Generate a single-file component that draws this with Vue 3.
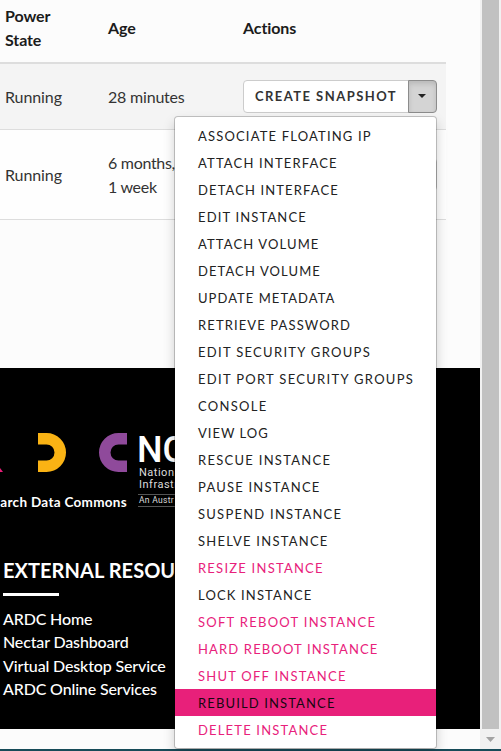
<script setup>
// label, kind, letter-spacing in px
const items = [
  ['Associate Floating IP', 0, 1.17], ['Attach Interface', 0, 1.17], ['Detach Interface', 0, 1.12],
  ['Edit Instance', 0, 1.15], ['Attach Volume', 0, 1.13], ['Detach Volume', 0, 1.1],
  ['Update Metadata', 0, 1.05], ['Retrieve Password', 0, 1.12], ['Edit Security Groups', 0, 1.3],
  ['Edit Port Security Groups', 0, 1.3], ['Console', 0, 1.3], ['View Log', 0, 1.0],
  ['Rescue Instance', 0, 1.28], ['Pause Instance', 0, 1.22], ['Suspend Instance', 0, 1.24],
  ['Shelve Instance', 0, 1.24], ['Resize Instance', 1, 1.23], ['Lock Instance', 0, 1.15],
  ['Soft Reboot Instance', 1, 1.27], ['Hard Reboot Instance', 1, 1.15], ['Shut Off Instance', 1, 1.24],
  ['Rebuild Instance', 2, 1.13], ['Delete Instance', 1, 1.18],
]
const kinds = ['', 'danger', 'active']
const links = ['ARDC Home', 'Nectar Dashboard', 'Virtual Desktop Service', 'ARDC Online Services']
</script>

<template>
  <div class="window">
    <div class="viewport">
      <div class="page">
        <section class="table">
          <div class="row head"><span>Power<br>State</span><span>Age</span><span>Actions</span></div>
          <div class="row first">
            <span>Running</span><span class="age">28 minutes</span>
            <div class="group">
              <button class="snapshot">Create Snapshot</button>
              <button class="toggle"><i class="caret"></i></button>
              <ul class="menu">
                <li v-for="[label, kind, gap] in items" :key="label" :class="kinds[kind]" :style="{ letterSpacing: gap + 'px' }">{{ label }}</li>
              </ul>
            </div>
          </div>
          <div class="row second">
            <span>Running</span><span class="age">6 months,<br>1 week</span>
            <div class="group"><button class="snapshot"></button><button class="toggle closed"></button></div>
          </div>
        </section>
        <footer>
          <div class="logos">
            <div class="ardc">
              <svg width="128" height="40" viewBox="0 0 128 40">
                <path d="M0 35L3 39H0Z" fill="#e91e79" />
                <path d="M38 0H46.5A19.5 19.5 0 0 1 46.5 39H38V27.5H46.5A8 8 0 0 0 46.5 11.5H38Z" fill="#fab314" />
                <path d="M127 0H118.5A19.5 19.5 0 0 0 118.5 39H127V27.5H118.5A8 8 0 0 1 118.5 11.5H127Z" fill="#8f4a9b" />
              </svg>
              <div class="commons">arch Data Commons</div>
            </div>
            <div class="ncris">
              <div class="big">NC</div>
              <div class="small">Nation<br>Infrastr</div>
              <div class="tiny">An Austr</div>
            </div>
          </div>
          <h3>EXTERNAL RESOU</h3>
          <div class="rule"></div>
          <nav><a v-for="l in links" :key="l">{{ l }}</a></nav>
        </footer>
      </div>
      <div class="scrollbar"><div class="thumb"></div><div class="end"><svg width="9" height="5" viewBox="0 0 9 5"><path d="M0 0H9L4.5 5Z" fill="#a3a3a3" /></svg></div></div>
    </div>
    <div class="taskbar"></div>
  </div>
</template>

<style>
body { overflow: hidden; }
</style>
<style scoped>
* { box-sizing: border-box; }
.window { width: 501px; height: 751px; overflow: hidden; font: 16px/24px Lato, "Liberation Sans", sans-serif; color: #333; background: #fcfcfc; }
.viewport { display: flex; height: 749px; }
.page { width: 480px; flex: none; }
.table { height: 368px; }
.row { display: grid; grid-template-columns: 103px 135px 203px; padding-left: 5px; width: 446px; align-items: center; }
.head { height: 64px; padding-bottom: 6px; border-bottom: 2px solid #ddd; font-weight: 700; color: #1b1b1b; }
.first { height: 66px; border-bottom: 1px solid #ddd; background: #f4f4f4; }
.second { height: 90px; border-bottom: 1px solid #ddd; background: #fefefe; }
.row > span { letter-spacing: -.1px; }
.row > .age { letter-spacing: -.2px; }
.second > .age { letter-spacing: -.3px; }
.group { position: relative; display: flex; width: 194px; height: 33px; }
button { height: 33px; margin: 0; padding: 0; background: #fff; border: 1px solid #ccc; font: 700 13px/31px Lato, sans-serif; color: #333; }
.snapshot { width: 166px; flex: none; border-radius: 4px 0 0 4px; letter-spacing: 1.46px; text-transform: uppercase; white-space: nowrap; }
.toggle { display: flex; align-items: center; justify-content: center; width: 29px; flex: none; margin-left: -1px; border-color: #8c8c8c; border-radius: 0 4px 4px 0; background: #d4d4d4; box-shadow: inset 0 3px 5px rgba(0,0,0,.125); }
.closed { background: #fff; border-color: #ccc; box-shadow: none; }
.caret { margin-top: -1px; margin-right: 1px; border: 4px solid transparent; border-top-color: #222; border-bottom: 0; }
.menu { position: absolute; z-index: 2; top: 36px; right: 0; width: 263px; height: 633px; margin: 0; padding: 5px 0; list-style: none; background: #fff; background-clip: padding-box; border: 1px solid rgba(0,0,0,.2); border-radius: 4px; box-shadow: 0 6px 12px rgba(0,0,0,.175); }
li { height: 27px; padding-left: 23px; font-size: 13px; line-height: 28px; text-transform: uppercase; color: #222; white-space: nowrap; }
.danger { color: #e8217b; }
.active { background: #e8207a; color: #160710; }
footer { height: 361px; overflow: hidden; background: #000; color: #fff; padding-top: 65px; }
.logos { display: flex; height: 125px; }
.ardc { width: 138px; flex: none; }
.ardc svg { display: block; }
.commons { display: flex; justify-content: flex-end; width: 127px; margin-top: 17px; font-size: 13.5px; line-height: 24px; font-weight: 700; letter-spacing: .3px; white-space: nowrap; }
.ncris { width: 50px; white-space: nowrap; font-family: Roboto, sans-serif; color: #ddd; }
.big { height: 34px; font-size: 36px; line-height: 34px; font-weight: 500; letter-spacing: 0; margin-left: -1px; color: #fff; }
.small { margin-left: 1px; font-size: 11px; line-height: 12px; letter-spacing: .5px; }
.tiny { width: 50px; height: 13px; margin-top: 3px; padding-left: 1px; border-top: 1px solid #555; border-bottom: 1px solid #555; font-size: 8.5px; line-height: 11px; letter-spacing: .3px; }
h3 { margin: 0 0 0 3px; font-size: 20px; line-height: 25px; font-weight: 700; letter-spacing: .05px; white-space: nowrap; }
.rule { width: 56px; height: 3px; margin: 10px 0 0 3px; background: #fff; }
nav { display: flex; flex-direction: column; padding: 11px 0 0 3px; }
nav a { height: 23.4px; font-size: 16px; line-height: 24px; font-weight: 500; letter-spacing: -.15px; }
.scrollbar { width: 21px; height: 749px; padding-left: 2px; background: #f1f1f1; }
.thumb { width: 17px; height: 729px; background: #c1c1c1; }
.end { display: flex; width: 17px; height: 20px; align-items: center; justify-content: center; }
.end svg { display: block; }
.taskbar { height: 2px; background: #174b59; }
</style>
